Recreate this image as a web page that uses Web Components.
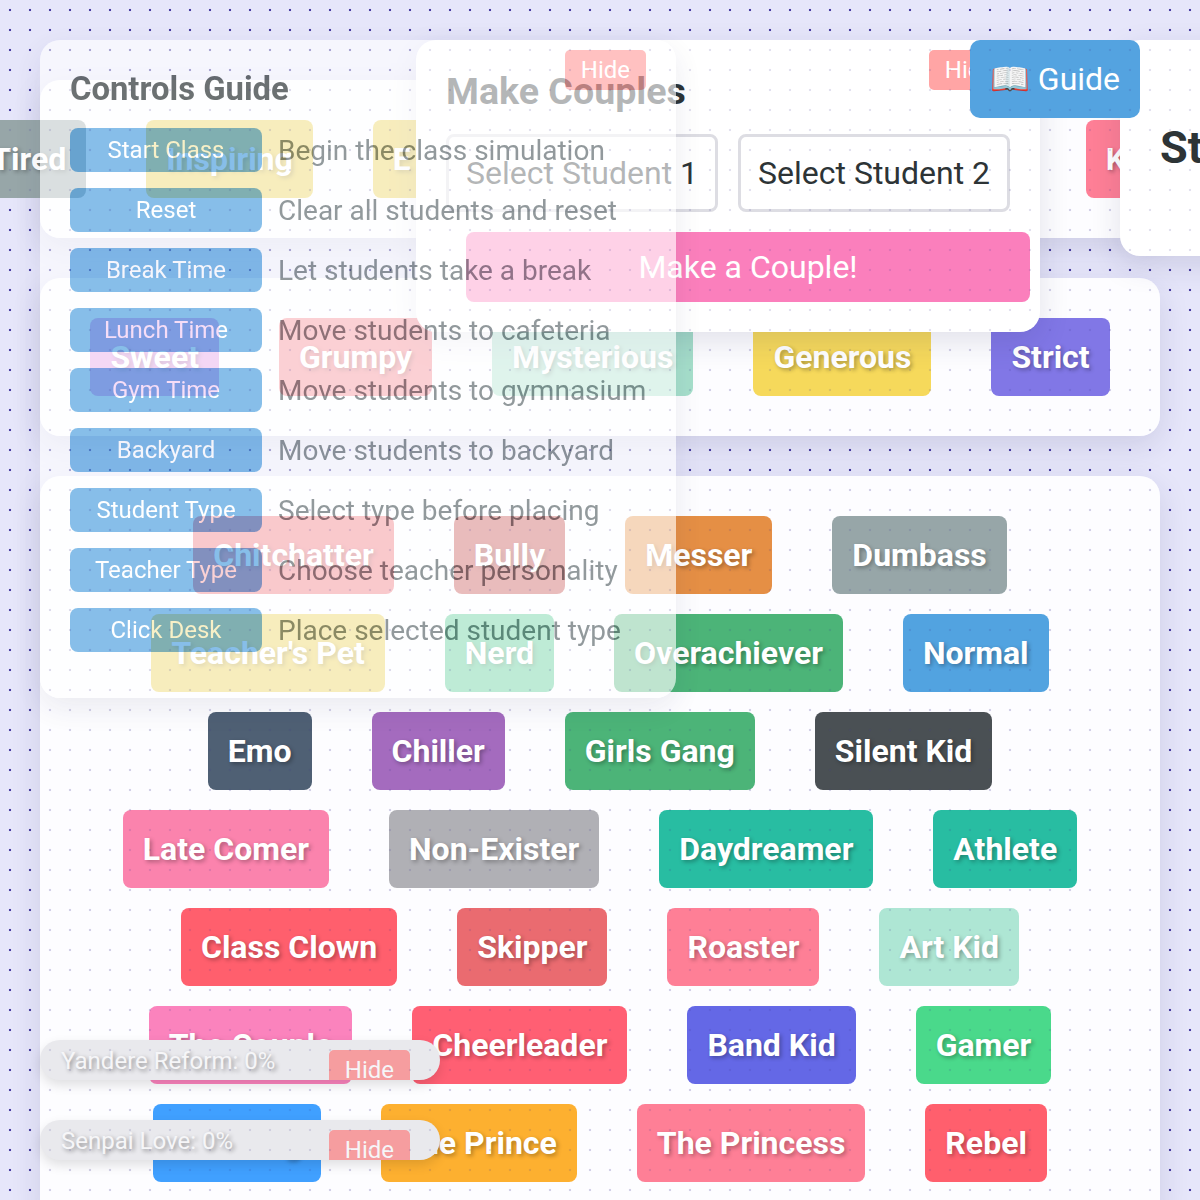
<!DOCTYPE html>
<html>
<head>
<meta charset="utf-8">
<title>Classroom</title>
<style>
  html, body { margin: 0; height: 1200px; overflow: hidden; }
  body {
    font-family: Roboto, "Liberation Sans", sans-serif;
    color: #2d3436;
  }
  #stage {
    position: relative; height: 1200px; overflow: hidden; filter: blur(.4px);
    background-color: #e6e6fa;
    background-image: radial-gradient(circle at 10px 10px, #4a3fa5 1px, transparent 1.6px);
    background-size: 20px 20px;
  }
</style>
</head>
<body>
<div id="stage">
<class-room>
  <trait-panel nowrap>
    <trait-tile color="#97a6a8">Tired</trait-tile>
    <trait-tile color="#e9cc46">Inspiring</trait-tile>
    <trait-tile color="#e9cc46" style="width:653px">E</trait-tile>
    <trait-tile color="#fe7f96" style="width:143px">K</trait-tile>
  </trait-panel>
  <trait-panel>
    <trait-tile color="#e08fe3">Sweet</trait-tile>
    <trait-tile color="#f47b86">Grumpy</trait-tile>
    <trait-tile color="#a6dfcb">Mysterious</trait-tile>
    <trait-tile color="#f6d95b">Generous</trait-tile>
    <trait-tile color="#8177e6">Strict</trait-tile>
  </trait-panel>
  <trait-panel>
    <trait-tile color="#ee6772">Chitchatter</trait-tile>
    <trait-tile color="#c14343">Bully</trait-tile>
    <trait-tile color="#e58f45">Messer</trait-tile>
    <trait-tile color="#97a6a8">Dumbass</trait-tile>
    <trait-tile color="#e9cc46">Teacher's Pet</trait-tile>
    <trait-tile color="#4bc78c">Nerd</trait-tile>
    <trait-tile color="#4cb478">Overachiever</trait-tile>
    <trait-tile color="#52a3e0">Normal</trait-tile>
    <trait-tile color="#4f6074">Emo</trait-tile>
    <trait-tile color="#a46bbe">Chiller</trait-tile>
    <trait-tile color="#4cb478">Girls Gang</trait-tile>
    <trait-tile color="#4a5054">Silent Kid</trait-tile>
    <trait-tile color="#fb83ad">Late Comer</trait-tile>
    <trait-tile color="#b0b0b5">Non-Exister</trait-tile>
    <trait-tile color="#28bda2">Daydreamer</trait-tile>
    <trait-tile color="#28bda2">Athlete</trait-tile>
    <trait-tile color="#ff5f6d">Class Clown</trait-tile>
    <trait-tile color="#ea6b70">Skipper</trait-tile>
    <trait-tile color="#fe7f96">Roaster</trait-tile>
    <trait-tile color="#aee6d4">Art Kid</trait-tile>
    <trait-tile color="#fb83bd">The Couple</trait-tile>
    <trait-tile color="#ff5f73">Cheerleader</trait-tile>
    <trait-tile color="#6468e6">Band Kid</trait-tile>
    <trait-tile color="#4ad98b">Gamer</trait-tile>
    <trait-tile color="#40a0ff">The King</trait-tile>
    <trait-tile color="#fdb030">The Prince</trait-tile>
    <trait-tile color="#fe7f96">The Princess</trait-tile>
    <trait-tile color="#ff5f6d">Rebel</trait-tile>
  </trait-panel>
</class-room>

<couple-panel></couple-panel>
<controls-guide></controls-guide>
<side-panel>St</side-panel>
<guide-button></guide-button>
<status-bar top="1040">Yandere Reform: 0%</status-bar>
<status-bar top="1120">Senpai Love: 0%</status-bar>
<dot-overlay></dot-overlay>
</div>

<script>
const define = (name, css, html, setup) => {
  customElements.define(name, class extends HTMLElement {
    constructor() {
      super();
      const shadowRoot = this.attachShadow({ mode: 'open' });
      shadowRoot.innerHTML = `<style>${css}</style>${html}`;
      if (setup) setup(this, shadowRoot);
    }
  });
};

const PANEL_SHADOW = '0 10px 30px rgba(40,40,90,.13)';

define('class-room', `
  :host { display: flex; flex-direction: column; gap: 40px; padding: 80px 40px 0; }
`, '<slot></slot>');

define('trait-panel', `
  :host { display: block; background: rgba(255,255,255,.9); border-radius: 20px; box-shadow: ${PANEL_SHADOW}; }
  #row { display: flex; flex-wrap: wrap; justify-content: center; gap: 20px 60px; padding: 40px; }
  :host([nowrap]) #row { flex-wrap: nowrap; }
`, '<div id="row"><slot></slot></div>');

define('trait-tile', `
  :host {
    display: block; flex: none; box-sizing: border-box; padding: 20px; border-radius: 8px;
    font-size: 32px; font-weight: 700; color: #fff; white-space: nowrap;
    text-shadow: 2px 2px 4px rgba(0,0,0,.3);
  }
`, '<slot></slot>', (el) => {
  el.style.background = el.getAttribute('color');
});

define('hide-button', `
  :host {
    position: absolute; top: 10px; right: 30px; display: block; padding: 6px 16px;
    height: 28px; line-height: 28px; background: #ff6b6b; opacity: .6;
    border-radius: 5px; color: #fff; font-size: 24px; font-weight: 400; text-shadow: none;
  }
`, 'Hide');

define('couple-panel', `
  :host {
    position: absolute; left: 416px; top: 40px; width: 624px; box-sizing: border-box; padding: 30px;
    background: #fff; border-radius: 20px; box-shadow: ${PANEL_SHADOW};
  }
  h2 { margin: 0 0 22px; font-size: 37.6px; font-weight: 700; line-height: 42px; color: #2d3436; }
  #picks { display: flex; gap: 20px; margin-bottom: 20px; }
  .pick {
    box-sizing: border-box; width: 272px; height: 78px; padding: 17px; border: 3px solid #dddde3; border-radius: 8px;
    font-size: 32px; line-height: 38px; white-space: nowrap; color: #2d3436;
  }
  #make {
    margin-left: 20px; margin-right: -20px; height: 70px; line-height: 70px; text-align: center;
    background: #fb7fbc; border-radius: 8px; color: #fff; font-size: 32px;
  }
`, `<hide-button></hide-button>
  <h2>Make Couples</h2>
  <div id="picks"><div class="pick">Select Student 1</div><div class="pick">Select Student 2</div></div>
  <div id="make">Make a Couple!</div>`);

define('control-row', `
  :host { display: flex; align-items: center; gap: 16px; margin-bottom: 16px; white-space: nowrap; }
  #key {
    flex: none; box-sizing: border-box; width: 192px; height: 44px; line-height: 44px; text-align: center;
    background: #54a3e0; border-radius: 8px; color: #fff; font-size: 24px;
  }
  #text { font-size: 28px; color: #636e72; }
`, '<div id="key"></div><div id="text"><slot></slot></div>', (el, root) => {
  root.querySelector('#key').textContent = el.getAttribute('key');
});

define('controls-guide', `
  :host {
    position: absolute; left: 40px; top: 40px; width: 636px; box-sizing: border-box; padding: 30px;
    background: rgba(255,255,255,.92); opacity: .7; border-radius: 20px; box-shadow: ${PANEL_SHADOW};
  }
  h2 { margin: 1px 0 20px; font-size: 32.8px; font-weight: 700; line-height: 37px; color: #2d3436; }
`, `<hide-button></hide-button>
  <h2>Controls Guide</h2>
  <control-row key="Start Class">Begin the class simulation</control-row>
  <control-row key="Reset">Clear all students and reset</control-row>
  <control-row key="Break Time">Let students take a break</control-row>
  <control-row key="Lunch Time">Move students to cafeteria</control-row>
  <control-row key="Gym Time">Move students to gymnasium</control-row>
  <control-row key="Backyard">Move students to backyard</control-row>
  <control-row key="Student Type">Select type before placing</control-row>
  <control-row key="Teacher Type">Choose teacher personality</control-row>
  <control-row key="Click Desk">Place selected student type</control-row>`);

define('side-panel', `
  :host {
    position: absolute; left: 1120px; top: 40px; width: 300px; height: 216px; box-sizing: border-box; padding: 82px 40px 0;
    background: #fff; border-radius: 20px; box-shadow: ${PANEL_SHADOW};
    font-size: 45px; font-weight: 700; line-height: 52px; color: #2d3436;
  }
`, '<slot></slot>');

define('guide-button', `
  :host {
    position: absolute; left: 970px; top: 40px; width: 170px; height: 78px; line-height: 78px; text-align: center;
    background: #54a3e0; border-radius: 10px; color: #fff; font-size: 32px; white-space: nowrap;
  }
`, '📖 Guide');

define('status-bar', `
  :host {
    position: absolute; left: 40px; width: 400px; height: 40px; overflow: hidden; box-sizing: border-box;
    padding: 6px 21px; background: #e9e9ed; border-radius: 20px; box-shadow: 0 5px 12px rgba(0,0,0,.12);
    color: #f6f6f8; font-size: 24px; line-height: 30px; text-shadow: 2px 2px 4px rgba(0,0,0,.4); white-space: nowrap;
  }
`, '<slot></slot><hide-button></hide-button>', (el) => {
  el.style.top = `${el.getAttribute('top')}px`;
});

define('dot-overlay', `
  :host {
    position: absolute; left: 0; top: 0; width: 1200px; height: 1200px; pointer-events: none;
    background-image: radial-gradient(circle at 10px 10px, rgba(60,50,150,.15) 1px, transparent 1.6px);
    background-size: 20px 20px;
  }
`, '');
</script>
</body>
</html>
